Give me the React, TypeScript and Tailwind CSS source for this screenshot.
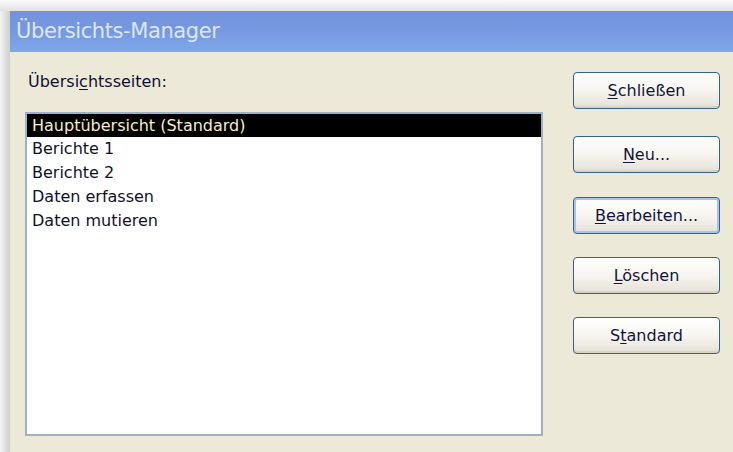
import type React from "react"

const pages = [
  "Hauptübersicht (Standard)",
  "Berichte 1",
  "Berichte 2",
  "Daten erfassen",
  "Daten mutieren",
]

const font = { fontFamily: "Tahoma, 'DejaVu Sans', sans-serif" }

function XpButton({
  pre,
  hot,
  post,
  focused,
  className = "",
}: {
  pre?: string
  hot: string
  post: string
  focused?: boolean
  className?: string
}) {
  return (
    <button
      className={
        "w-[147px] h-[37px] rounded-[4px] border border-[#35608f] bg-gradient-to-b from-[#ffffff] via-[#f6f5f0] to-[#e4e1d6] text-[16px] text-[#14143a] flex items-center justify-center " +
        (focused
          ? "shadow-[inset_0_0_0_2px_#a9c3ef] "
          : "shadow-[inset_0_-2px_0_#d8d4c4] ") +
        className
      }
    >
      <span>
        {pre}
        <span className="underline underline-offset-2">{hot}</span>
        {post}
      </span>
    </button>
  )
}

export default function App() {
  return (
    <div className="w-[733px] h-[452px] flex flex-col overflow-hidden bg-white" style={font}>
      {/* soft shadow above the window */}
      <div className="h-[11px] bg-gradient-to-b from-[#fbfbfb] to-[#e2e2e2]" />
      <div className="flex flex-1">
        {/* soft shadow left of the window */}
        <div className="w-[10px] bg-gradient-to-r from-[#f4f4f4] to-[#cfcfcf]" />
        <div className="flex-1 flex flex-col">
          <div className="h-[41px] bg-gradient-to-b from-[#7492dc] via-[#7698e2] to-[#80a8ea] flex items-center pl-[6px]">
            <span className="text-[21px] text-[#dde7f8] tracking-[-0.4px]">Übersichts-Manager</span>
          </div>
          <div className="flex-1 bg-[#ece9d8] flex">
            <div className="pl-[15px] pt-[20px] flex flex-col">
              <div className="ml-[3px] h-[20px] leading-[20px] text-[16px] text-[#101030]">
                Übersi<span className="underline underline-offset-2">c</span>htsseiten:
              </div>
              <div className="mt-[20px] w-[518px] h-[324px] border-2 border-[#9cb1ca] bg-white">
                {pages.map((p, i) => (
                  <div
                    key={p}
                    className={
                      "pl-[5px] text-[16px] " +
                      (i === 0
                        ? "bg-black text-[#f4eccc] h-[23px] leading-[23px]"
                        : "text-[#101030] h-[24px] leading-[24px]")
                    }
                  >
                    {p}
                  </div>
                ))}
              </div>
            </div>
            <div className="ml-[30px] pt-[20px] flex flex-col">
              <XpButton hot="S" post="chließen" />
              <XpButton hot="N" post="eu..." className="mt-[27px]" />
              <XpButton hot="B" post="earbeiten..." focused className="mt-[24px]" />
              <XpButton hot="L" post="öschen" className="mt-[23px]" />
              <XpButton pre="S" hot="t" post="andard" className="mt-[23px]" />
            </div>
          </div>
        </div>
      </div>
    </div>
  )
}
